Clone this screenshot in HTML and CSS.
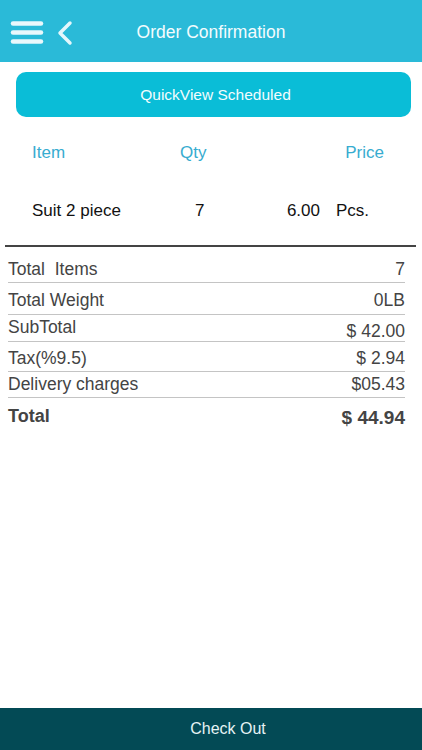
FILE: index.html
```html
<!DOCTYPE html>
<html lang="en">
<head>
<meta charset="utf-8">
<title>Order Confirmation</title>
<link rel="stylesheet" href="styles.css">
</head>
<body>
<div class="app">
  <header class="topbar">
    <div class="nav-icons">
      <svg class="menu" width="34" height="26" viewBox="0 0 34 26">
        <line x1="3" y1="3.5" x2="31" y2="3.5"/>
        <line x1="3" y1="12.5" x2="31" y2="12.5"/>
        <line x1="3" y1="21.5" x2="31" y2="21.5"/>
      </svg>
      <svg class="back" width="18" height="26" viewBox="0 0 18 26">
        <polyline points="14,3 4,13 14,23"/>
      </svg>
    </div>
    <h1 class="title">Order Confirmation</h1>
  </header>

  <main class="content">
    <div class="status-btn">QuickView Scheduled</div>

    <div class="col-head">
      <span class="c-item">Item</span>
      <span class="c-qty">Qty</span>
      <span class="c-price">Price</span>
    </div>

    <div class="item-row">
      <span class="i-name">Suit 2 piece</span>
      <span class="i-qty">7</span>
      <span class="i-price">6.00</span>
      <span class="i-unit">Pcs.</span>
    </div>

    <div class="divider"></div>

    <div class="summary">
      <div class="s-row r1"><span>Total&nbsp; Items</span><span>7</span></div>
      <div class="s-row r2"><span>Total Weight</span><span>0LB</span></div>
      <div class="s-row r3"><span>SubTotal</span><span class="down">$ 42.00</span></div>
      <div class="s-row r4"><span>Tax(%9.5)</span><span>$ 2.94</span></div>
      <div class="s-row r5"><span>Delivery charges</span><span>$05.43</span></div>
      <div class="s-row total"><span>Total</span><span class="big">$ 44.94</span></div>
    </div>
  </main>

  <footer class="checkout">Check Out</footer>
</div>
</body>
</html>
```

FILE: styles.css
```css
* { box-sizing: border-box; margin: 0; padding: 0; }

html, body { height: 100%; }

body {
  font-family: "Liberation Sans", Arial, sans-serif;
  background: #ffffff;
  color: #111;
}

.app {
  display: flex;
  flex-direction: column;
  min-height: 100vh;
}

.topbar {
  height: 62px;
  background: #2abad8;
  display: flex;
  align-items: center;
  position: relative;
}

.nav-icons {
  display: flex;
  align-items: center;
  padding-left: 10px;
  gap: 12px;
  margin-top: 3px;
}

.menu line {
  stroke: #e9f8fc;
  stroke-width: 4.5;
  stroke-linecap: round;
}

.back polyline {
  fill: none;
  stroke: #e4f7fc;
  stroke-width: 3.5;
  stroke-linecap: round;
  stroke-linejoin: round;
}

.title {
  position: absolute;
  left: 0;
  right: 0;
  top: 0;
  height: 62px;
  line-height: 64px;
  text-align: center;
  font-size: 17.5px;
  font-weight: normal;
  color: #f4fcfe;
  pointer-events: none;
}

.content {
  flex: 1;
}

.status-btn {
  margin: 10px 11px 0 16px;
  height: 45px;
  border-radius: 10px;
  background: #0abdd7;
  color: #f2fcfe;
  font-size: 15.5px;
  display: flex;
  align-items: center;
  justify-content: center;
  padding-left: 4px;
}

.col-head {
  height: 70px;
  display: flex;
  align-items: center;
  color: #37acd0;
  font-size: 17px;
  padding: 2px 38px 0 32px;
}

.c-item { width: 148px; }
.c-qty { flex: 1; }

.item-row {
  height: 46px;
  display: flex;
  align-items: center;
  font-size: 17px;
  color: #111;
  padding-left: 32px;
  padding-top: 2px;
}

.i-name { width: 163px; }
.i-qty { width: 40px; }
.i-price { width: 85px; text-align: right; }
.i-unit { margin-left: 16px; }

.divider {
  margin: 12px 6px 0 5px;
  height: 1.5px;
  background: #444;
}

.summary {
  margin: 0 17px 0 8px;
  color: #444;
  font-size: 17.5px;
}

.s-row {
  display: flex;
  justify-content: space-between;
  align-items: flex-end;
  line-height: 20px;
  padding-bottom: 3px;
  border-bottom: 1.5px solid #c4c4c4;
}

.r1 { height: 36px; }
.r2 { height: 32px; padding-bottom: 4px; }
.r3 { height: 27px; padding-bottom: 4px; }
.r4 { height: 30px; }
.r5 { height: 26px; }

.r3 .down { position: relative; top: 4px; }

.total {
  border-bottom: none;
  align-items: center;
  height: 36px;
  padding-bottom: 0;
  font-weight: bold;
  font-size: 18px;
}

.total .big { font-size: 19px; position: relative; top: 2px; }

.checkout {
  height: 42px;
  background: #034a55;
  color: #e6f3f4;
  font-size: 16px;
  display: flex;
  align-items: center;
  justify-content: center;
  padding-left: 34px;
}
```
